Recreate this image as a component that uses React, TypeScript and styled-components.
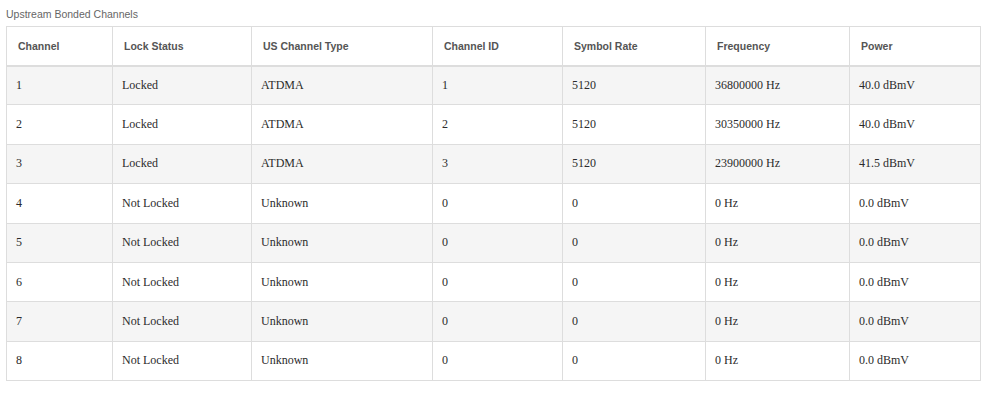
import React from 'react'
import styled, { createGlobalStyle } from 'styled-components'

const GlobalStyle = createGlobalStyle`
  html, body {
    margin: 0;
    padding: 0;
    background: #ffffff;
  }
`

const Page = styled.div`
  padding: 7px 0 0 6px;
  width: 999px;
  box-sizing: border-box;
`

const Title = styled.div`
  font-family: 'Liberation Sans', Arial, sans-serif;
  font-size: 10.5px;
  line-height: 14px;
  color: #666;
  margin-bottom: 5px;
`

const Table = styled.table`
  border-collapse: collapse;
  table-layout: fixed;
  width: 974px;
  border: 1px solid #dddddd;
`

const HeadCell = styled.th`
  font-family: 'Liberation Sans', Arial, sans-serif;
  font-size: 10.5px;
  font-weight: bold;
  color: #555;
  text-align: left;
  height: 39px;
  padding: 0 11px;
  border: 1px solid #dddddd;
  border-bottom-width: 2px;
  box-sizing: border-box;
`

const Row = styled.tr<{ striped: boolean }>`
  background: ${({ striped }) => (striped ? '#f5f5f5' : '#ffffff')};
  height: 39.4px;
`

const Cell = styled.td`
  font-family: 'Liberation Serif', 'Times New Roman', serif;
  font-size: 12px;
  color: #2b2b2b;
  padding: 0 9px;
  border: 1px solid #dddddd;
`

const columns = [
  { label: 'Channel', width: 106 },
  { label: 'Lock Status', width: 139 },
  { label: 'US Channel Type', width: 181 },
  { label: 'Channel ID', width: 130 },
  { label: 'Symbol Rate', width: 143 },
  { label: 'Frequency', width: 144 },
  { label: 'Power', width: 131 },
]

const rows = [
  ['1', 'Locked', 'ATDMA', '1', '5120', '36800000 Hz', '40.0 dBmV'],
  ['2', 'Locked', 'ATDMA', '2', '5120', '30350000 Hz', '40.0 dBmV'],
  ['3', 'Locked', 'ATDMA', '3', '5120', '23900000 Hz', '41.5 dBmV'],
  ['4', 'Not Locked', 'Unknown', '0', '0', '0 Hz', '0.0 dBmV'],
  ['5', 'Not Locked', 'Unknown', '0', '0', '0 Hz', '0.0 dBmV'],
  ['6', 'Not Locked', 'Unknown', '0', '0', '0 Hz', '0.0 dBmV'],
  ['7', 'Not Locked', 'Unknown', '0', '0', '0 Hz', '0.0 dBmV'],
  ['8', 'Not Locked', 'Unknown', '0', '0', '0 Hz', '0.0 dBmV'],
]

export default function App() {
  return (
    <Page>
      <GlobalStyle />
      <Title>Upstream Bonded Channels</Title>
      <Table>
        <colgroup>
          {columns.map((c) => (
            <col key={c.label} style={{ width: c.width }} />
          ))}
        </colgroup>
        <thead>
          <tr>
            {columns.map((c) => (
              <HeadCell key={c.label}>{c.label}</HeadCell>
            ))}
          </tr>
        </thead>
        <tbody>
          {rows.map((r, i) => (
            <Row key={r[0]} striped={i % 2 === 0}>
              {r.map((v, j) => (
                <Cell key={j}>{v}</Cell>
              ))}
            </Row>
          ))}
        </tbody>
      </Table>
    </Page>
  )
}
